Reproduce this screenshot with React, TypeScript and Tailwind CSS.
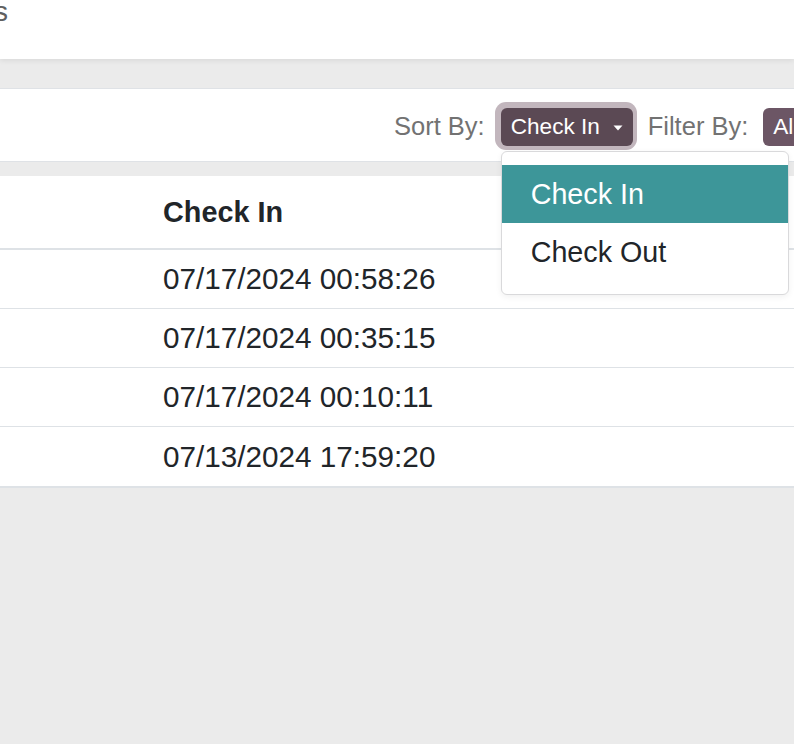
import React from "react";

const rows = [
  "07/17/2024 00:58:26",
  "07/17/2024 00:35:15",
  "07/17/2024 00:10:11",
  "07/13/2024 17:59:20",
];

function Caret() {
  return (
    <svg width="10" height="6" viewBox="0 0 10 6" className="ml-[13px] mt-[1px]">
      <path d="M0.5 0.5 L9.5 0.5 L5 5.5 Z" fill="#ffffff" />
    </svg>
  );
}

export default function App() {
  return (
    <div className="w-full h-[744px] overflow-hidden bg-[#ebebeb] font-['Liberation_Sans',Arial,sans-serif]">
      {/* header */}
      <div className="relative z-10 h-[59px] bg-white shadow-[0_2px_5px_rgba(0,0,0,0.07)]">
        <div className="w-[8px] overflow-hidden flex justify-end">
          <span className="whitespace-nowrap text-[28px] leading-[24px] text-[#606060]">
            Attendances
          </span>
        </div>
      </div>

      <div className="h-[29px]" />

      {/* toolbar */}
      <div className="h-[74px] bg-white border-y border-[#dfe2e6] flex items-center pt-[4px] pl-[394px] whitespace-nowrap overflow-visible">
        <span className="text-[25.5px] leading-none text-[#727272]">Sort By:</span>
        <div className="relative ml-[16px] z-20">
          <button className="h-[38px] w-[132px] rounded-[6px] bg-[#5b4954] flex items-center pl-[10px] text-white text-[22.6px] leading-none shadow-[-1px_-1px_0_5px_#c2b6bd]">
            <span>Check In</span>
            <Caret />
          </button>
          <div className="absolute left-0 top-[43px] w-[288px] h-[144px] bg-white border border-[#d9d9db] rounded-[6px] shadow-[0_2px_6px_rgba(0,0,0,0.06)] py-[13px]">
            <div className="h-[58px] bg-[#3d9699] text-white flex items-center pl-[29px] text-[28.7px] leading-none">
              Check In
            </div>
            <div className="h-[58px] text-[#212529] flex items-center pl-[29px] text-[28.7px] leading-none">
              Check Out
            </div>
          </div>
        </div>
        <span className="ml-[15px] text-[25.5px] leading-none text-[#727272]">Filter By:</span>
        <button className="ml-[15px] h-[38px] w-[110px] rounded-[6px] bg-[#6c5665] flex items-center pl-[10px] text-white text-[22.6px] leading-none shrink-0">
          All
        </button>
      </div>

      <div className="h-[14px]" />

      {/* table */}
      <div className="bg-white border-b-2 border-[#dee2e6] text-[#212529]">
        <div className="h-[74px] grid grid-cols-[163px_1fr] items-center border-b-2 border-[#dee2e6]">
          <div />
          <div className="font-bold text-[28.8px] leading-none">Check In</div>
        </div>
        {rows.map((r, i) => (
          <div
            key={r}
            className={
              i < rows.length - 1
                ? "h-[59px] grid grid-cols-[163px_1fr] items-center border-b border-[#dee2e6]"
                : "h-[59px] grid grid-cols-[163px_1fr] items-center"
            }
          >
            <div />
            <div className="text-[29.7px] leading-none">{r}</div>
          </div>
        ))}
      </div>
    </div>
  );
}
